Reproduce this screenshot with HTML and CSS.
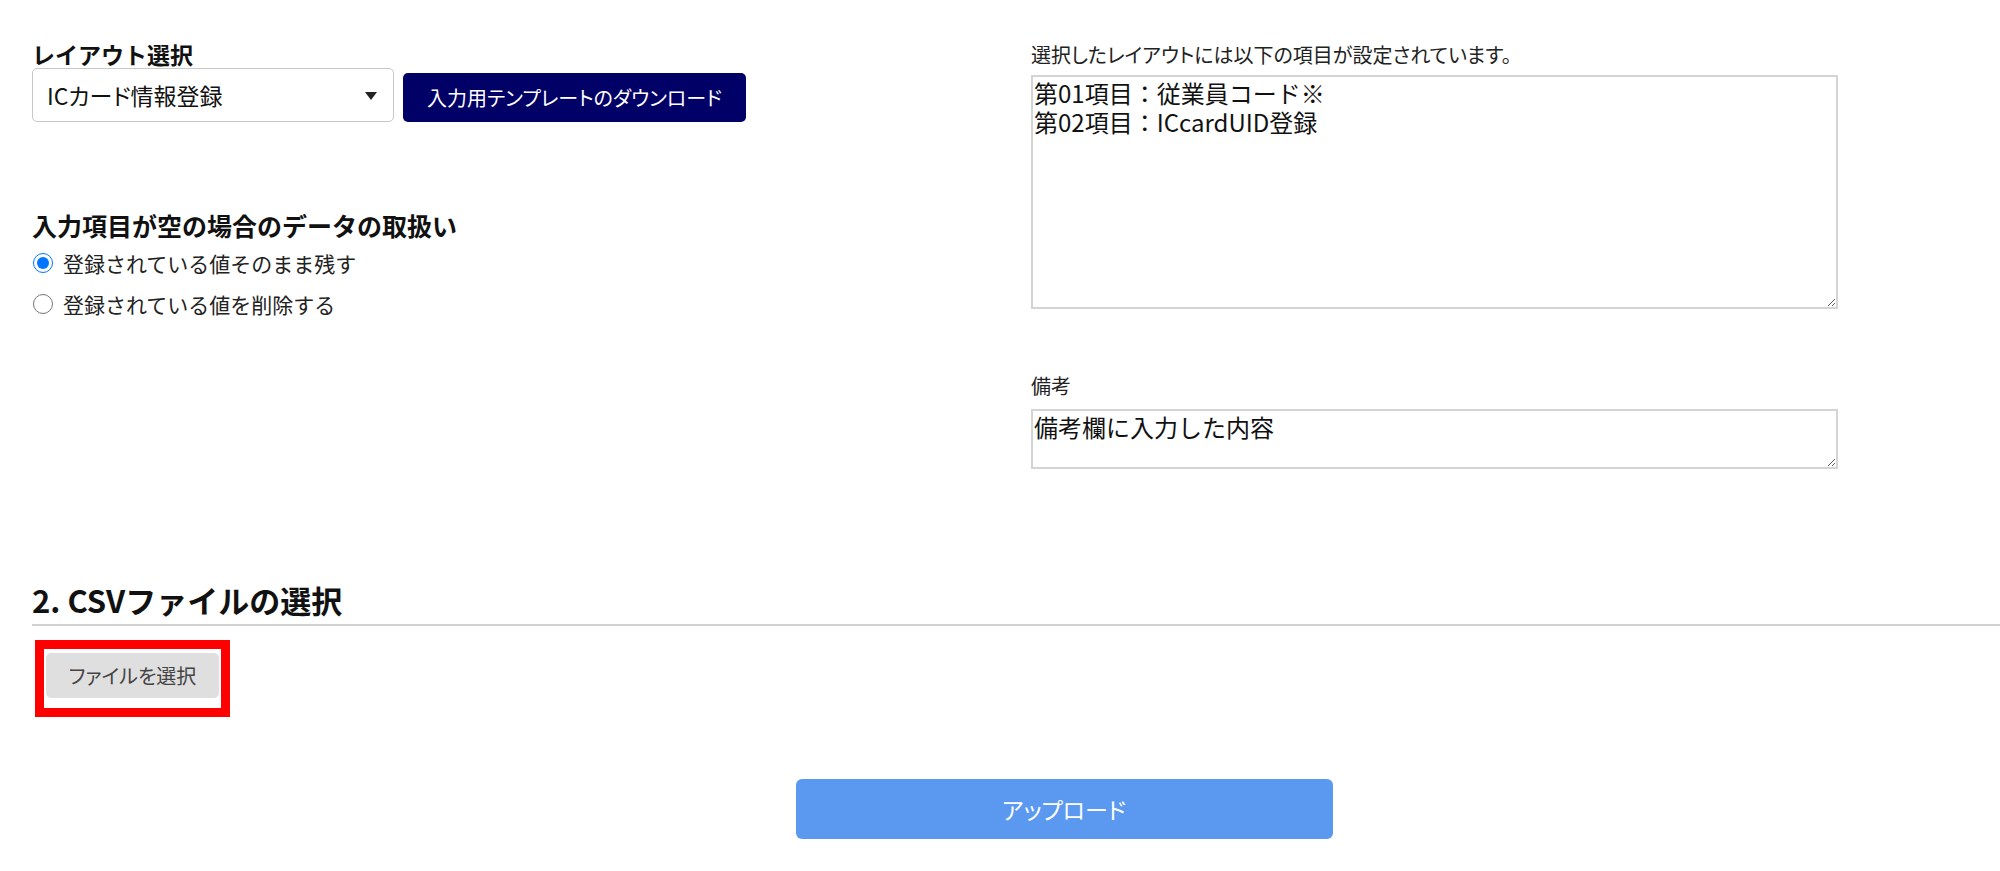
FILE: index.html
```html
<!DOCTYPE html>
<html lang="ja">
<head>
  <meta charset="UTF-8">
  <meta name="viewport" content="width=device-width, initial-scale=1.0">
  <title>CSVアップロード</title>
  <link rel="stylesheet" href="styles.css">
</head>
<body>

<div class="page">
  <div class="columns">
    <div class="col-left">
      <h4 class="field-title">レイアウト選択</h4>
      <div class="layout-row">
        <div class="select-wrap">
          <select id="layout">
            <option>ICカード情報登録</option>
          </select>
          <span class="select-arrow"></span>
        </div>
        <button class="btn-download">入力用テンプレートのダウンロード</button>
      </div>

      <h4 class="field-title blank-title">入力項目が空の場合のデータの取扱い</h4>
      <div class="radio-list">
        <label class="radio-row"><input type="radio" name="blank" checked>登録されている値そのまま残す</label>
        <label class="radio-row"><input type="radio" name="blank">登録されている値を削除する</label>
      </div>
    </div>

    <div class="col-right">
      <p class="note-label">選択したレイアウトには以下の項目が設定されています。</p>
      <textarea class="items" readonly>第01項目：従業員コード※
第02項目：ICcardUID登録</textarea>

      <p class="note-label memo-label">備考</p>
      <textarea class="memo">備考欄に入力した内容</textarea>
    </div>
  </div>

  <h2 class="section-title">2. CSVファイルの選択</h2>
  <div class="file-area">
    <!-- red frame marks the file button -->
    <div class="file-mark">
      <button class="btn-file">ファイルを選択</button>
    </div>
  </div>

  <div class="upload-row">
    <button class="btn-upload">アップロード</button>
  </div>
</div>

</body>
</html>
```

FILE: styles.css
```css
body {
  margin: 0;
  padding: 0;
  background-color: #fff;
  color: #111;
  font-family: "Noto Sans CJK JP", "Noto Sans", sans-serif;
}

.page {
  padding: 40px 0 40px 32px;
}

.columns {
  display: flex;
}

.col-left {
  width: 999px;
}

.col-right {
  width: 807px;
}

.field-title {
  margin: 0;
  font-size: 23px;
  font-weight: bold;
  line-height: 28px;
}

.layout-row {
  display: flex;
  align-items: flex-end;
  gap: 9px;
}

.select-wrap {
  position: relative;
  width: 362px;
}

.select-wrap select {
  width: 100%;
  height: 54px;
  appearance: none;
  border: 1px solid #c8c8c8;
  border-radius: 5px;
  background-color: #fff;
  padding: 0 40px 0 14px;
  font-family: inherit;
  font-size: 23px;
  font-feature-settings: "palt";
  color: #111;
}

.select-arrow {
  position: absolute;
  right: 17px;
  top: 24px;
  border-left: 6px solid transparent;
  border-right: 6px solid transparent;
  border-top: 8px solid #222;
  pointer-events: none;
}

.btn-download {
  width: 343px;
  height: 49px;
  padding: 0;
  background-color: #000066;
  color: #fff;
  border: none;
  border-radius: 5px;
  font-family: inherit;
  font-size: 20px;
  font-feature-settings: "palt";
  cursor: pointer;
}

.blank-title {
  margin-top: 88px;
  font-size: 25px;
  line-height: 30px;
}

.radio-list {
  margin-top: 2px;
}

.radio-row {
  display: flex;
  align-items: center;
  gap: 10px;
  height: 41px;
  font-size: 21px;
  color: #222;
}

.radio-row input {
  width: 20px;
  height: 20px;
  margin: 0 0 0 1px;
}

.note-label {
  margin: 0;
  font-size: 20px;
  line-height: 30px;
  font-feature-settings: "palt";
  color: #222;
}

.memo-label {
  margin-top: 62px;
}

.col-right textarea {
  display: block;
  width: 807px;
  box-sizing: border-box;
  border: 2px solid #d4d4d4;
  padding: 1px 1px;
  font-family: inherit;
  font-size: 24px;
  line-height: 29px;
  color: #111;
  outline: none;
}

.items {
  height: 234px;
  margin-top: 5px;
}

.memo {
  height: 60px;
  margin-top: 8px;
}

.section-title {
  margin: 111px 0 0;
  padding-bottom: 4px;
  font-size: 31px;
  line-height: 40px;
  font-weight: bold;
  border-bottom: 2px solid #d0d0d0;
}

.file-area {
  display: flex;
  margin-top: 14px;
  padding-left: 3px;
}

.file-mark {
  border: 9px solid #ff0000;
  padding: 4px 2px 10px;
}

.btn-file {
  display: block;
  width: 173px;
  height: 45px;
  background-color: #dfdfdf;
  border: none;
  border-radius: 5px;
  color: #444;
  font-family: inherit;
  font-size: 20px;
  font-feature-settings: "palt";
}

.upload-row {
  display: flex;
  justify-content: center;
  padding-left: 96px;
  margin-top: 62px;
}

.btn-upload {
  width: 537px;
  height: 60px;
  background-color: #5a99ef;
  color: #fff;
  border: none;
  border-radius: 6px;
  font-family: inherit;
  font-size: 23px;
  font-feature-settings: "palt";
  cursor: pointer;
}
```
